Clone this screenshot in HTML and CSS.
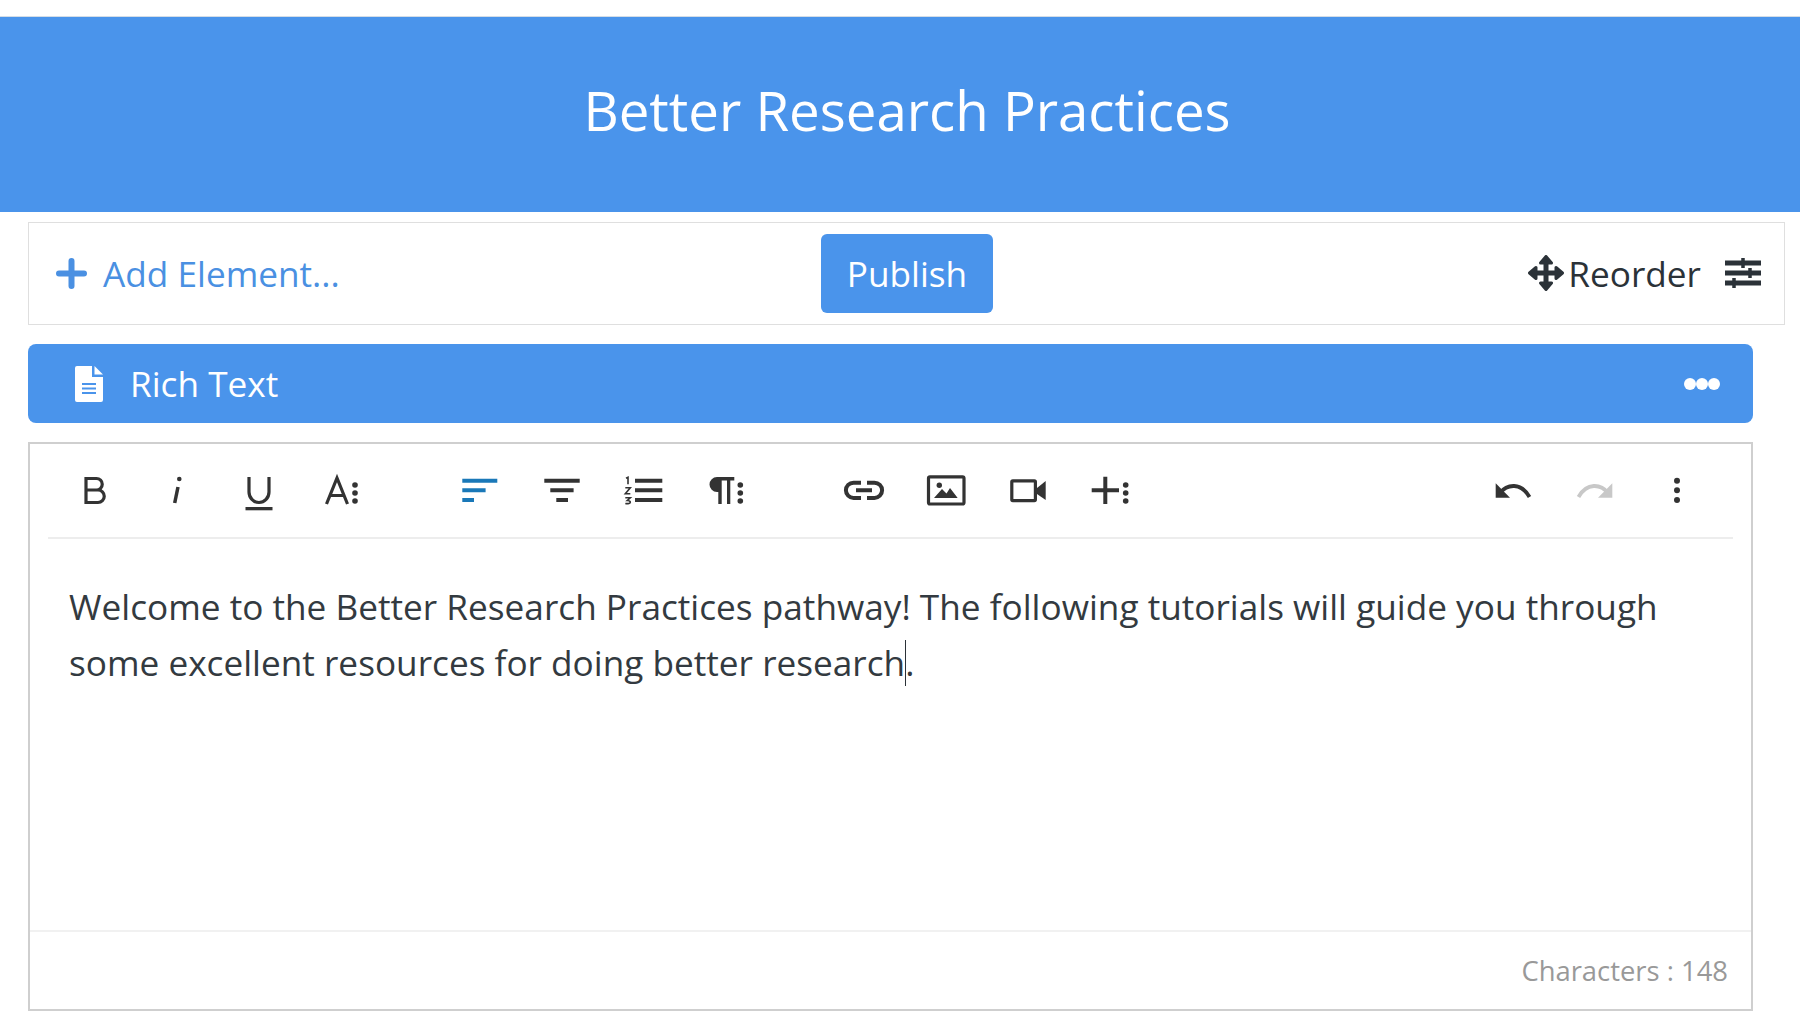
FILE: index.html
```html
<!DOCTYPE html>
<html lang="en">
<head>
<meta charset="utf-8">
<title>Better Research Practices</title>
<link rel="stylesheet" href="styles.css">
</head>
<body>
<header class="hero"><h1 class="hero-title">Better Research Practices</h1></header>
<section class="actions">
  <div class="actions-left">
    <svg class="add-icon" viewBox="0 0 31 31"><path d="M15.500 3v25M3 15.500h25"/></svg>
    <span class="add-label">Add Element...</span>
  </div>
  <button class="publish">Publish</button>
  <div class="actions-right">
    <svg class="move-icon" viewBox="0 0 36 36"><path class="dark-stroke" d="M18 5v26M5 18h26"/><path class="dark-fill" d="M18 1.500l5.500 6.500h-11zM18 34.500l5.500-6.500h-11zM1.500 18l6.500-5.500v11zM34.500 18l-6.500-5.500v11z"/></svg>
    <span class="reorder">Reorder</span>
    <svg class="sliders-icon" viewBox="0 0 36 32"><path class="dark-stroke" d="M0 6h36M0 16h36M0 26h36"/><path class="dark-stroke-thin" d="M18 1v10M25 11v10M9 21v10"/></svg>
  </div>
</section>
<div class="block-bar">
  <svg class="doc-icon" viewBox="0 0 28 36"><path class="doc-body" d="M2 0h15v11h11v23a2 2 0 0 1-2 2H2a2 2 0 0 1-2-2V2a2 2 0 0 1 2-2z"/><path class="doc-body" d="M19.500 0L28 8.500h-8.500z"/><path class="doc-lines" d="M7 18h14M7 22.500h14M7 27h14"/></svg>
  <span class="block-name">Rich Text</span>
  <span class="block-dots"><i></i><i></i><i></i></span>
</div>
<section class="editor">
  <div class="tools">
    <div class="tool-group">
      <button class="tool"><svg viewBox="0 0 44 44"><path class="line" d="M14 10.500h10.500a5.750 5.750 0 0 1 0 11.500H14zM14 22h12a6.250 6.250 0 0 1 0 12.500H14z"/></svg></button>
      <button class="tool"><svg viewBox="0 0 44 44"><circle class="solid" cx="24.300" cy="11" r="2.300"/><path class="line line-i" d="M23 19l-3.300 16"/></svg></button>
      <button class="tool"><svg viewBox="0 0 44 44"><path class="line" d="M12 9v15a10 10.500 0 0 0 20 0V9"/><rect class="solid" x="8.500" y="39" width="27" height="3.300"/></svg></button>
      <button class="tool"><svg viewBox="0 0 44 44"><path class="line" d="M6.500 36L17 10l10.500 26M10 27.500h14"/><circle class="solid" cx="35" cy="17" r="2.800"/><circle class="solid" cx="35" cy="25" r="2.800"/><circle class="solid" cx="35" cy="33" r="2.800"/></svg></button>
    </div>
    <div class="tool-group">
      <button class="tool"><svg viewBox="0 0 44 44"><path class="bar bar-active" d="M5.300 12.700h35M5.300 22.300h23.300M5.300 32h11.700"/></svg></button>
      <button class="tool"><svg viewBox="0 0 44 44"><path class="bar" d="M4.300 12.700h35.400M10.300 22.300h23.300M16.300 32h11.700"/></svg></button>
      <button class="tool"><svg viewBox="0 0 44 44"><path class="bar" d="M13 12.700h27.300M13 22.300h27.300M13 32h27.300"/><path class="num" d="M4 10.300l2-1v7M3.300 19.800h5l-5 6h5M3.300 29.800h5l-3 2.700c2 0 3 1 3 1.700 0 1-2 1.800-5 1.300"/></svg></button>
      <button class="tool"><svg viewBox="0 0 44 44"><path class="solid" d="M15 9h-3a7.500 7.500 0 0 0 0 15h3z"/><path class="solid" d="M12 9h17.300v3.500H25.300V36H22V12.500h-5.300V36h-3.400V12.500H12z"/><circle class="solid" cx="35.300" cy="17" r="2.800"/><circle class="solid" cx="35.300" cy="25" r="2.800"/><circle class="solid" cx="35.300" cy="33" r="2.800"/></svg></button>
    </div>
    <div class="tool-group">
      <button class="tool"><svg viewBox="0 0 44 44"><path class="bar" d="M19 14.700h-7.500a7.600 7.600 0 0 0 0 15.200H19M25 14.700h7.500a7.600 7.600 0 0 1 0 15.200H25M14 22.300h16"/></svg></button>
      <button class="tool"><svg viewBox="0 0 44 44"><rect class="line" x="3.500" y="8.800" width="35.500" height="27.200" rx="1.500"/><circle class="solid" cx="14.300" cy="17.300" r="2.700"/><path class="solid" d="M9 30l8-9 4.500 4.500L25 20l7.700 10z"/></svg></button>
      <button class="tool"><svg viewBox="0 0 44 44"><rect class="line" x="4.800" y="12.800" width="23.600" height="19.800" rx="1"/><path class="solid" d="M30 20l8.700-7v19L30 26z"/></svg></button>
      <button class="tool"><svg viewBox="0 0 44 44"><path class="bar" d="M15.300 8.700v27.300M1.700 22.300H29"/><circle class="solid" cx="35.700" cy="17" r="2.800"/><circle class="solid" cx="35.700" cy="25" r="2.800"/><circle class="solid" cx="35.700" cy="33" r="2.800"/></svg></button>
    </div>
    <div class="tool-group tool-group-end">
      <button class="tool"><svg viewBox="0 0 44 44"><path class="solid" d="M5.700 15.300v14.400h14.300z"/><path class="line line-heavy" d="M10 25c7-9 21-11 29.500 4"/></svg></button>
      <button class="tool tool-off"><svg viewBox="0 0 44 44"><path class="solid" d="M40.300 15.300v14.400H26z"/><path class="line line-heavy" d="M36 25c-7-9-21-11-29.500 4"/></svg></button>
      <button class="tool"><svg viewBox="0 0 44 44"><circle class="solid" cx="22" cy="12.700" r="3"/><circle class="solid" cx="22" cy="22.300" r="3"/><circle class="solid" cx="22" cy="32" r="3"/></svg></button>
    </div>
  </div>
  <div class="content">
    <p class="content-text">Welcome to the Better Research Practices pathway! The following tutorials will guide you through some excellent resources for doing better research<span class="caret"></span>.</p>
  </div>
  <footer class="counter">Characters : 148</footer>
</section>
</body>
</html>
```
FILE: styles.css
```css
* { box-sizing: border-box; }
html, body { height: 100%; }
body {
  margin: 0;
  padding-top: 16px;
  background: #fff;
  font-family: "Open Sans", sans-serif;
  color: #2b3238;
  overflow: hidden;
}
.hero {
  height: 196px;
  border-top: 1px solid #d4dde6;
  background: #4a94eb;
  display: flex;
  align-items: center;
  justify-content: center;
  padding: 0 0 9px 14px;
}
.hero-title {
  margin: 0;
  font-size: 54.600px;
  font-weight: 400;
  color: #fff;
}
.actions {
  margin: 10px 15px 0 28px;
  height: 103px;
  border: 1px solid #dfdfdf;
  display: grid;
  grid-template-columns: 1fr auto 1fr;
  align-items: center;
  padding: 0 23px 1px 27px;
}
.actions-left { display: flex; align-items: center; gap: 16px; }
.add-icon { width: 31px; height: 31px; }
.add-icon path { fill: none; stroke: #4a90e2; stroke-width: 6; stroke-linecap: round; }
.add-label { font-size: 35.200px; color: #4a90e2; }
.publish {
  width: 172px;
  height: 79px;
  margin-right: 3px;
  border: 0;
  border-radius: 6px;
  background: #4a94eb;
  color: #fff;
  font-family: inherit;
  font-size: 35.200px;
}
.actions-right { display: flex; align-items: center; justify-content: flex-end; }
.move-icon { width: 36px; height: 36px; margin-right: 4px; }
.reorder { font-size: 35.200px; margin-right: 24px; }
.sliders-icon { width: 36px; height: 32px; }
.dark-stroke { fill: none; stroke: #2b3238; stroke-width: 5; }
.dark-stroke-thin { fill: none; stroke: #2b3238; stroke-width: 3.500; }
.dark-fill { fill: #2b3238; stroke: #2b3238; stroke-width: 3; stroke-linejoin: round; }
.block-bar {
  margin: 19px 47px 0 28px;
  height: 79px;
  border-radius: 8px;
  background: #4a94eb;
  display: flex;
  align-items: center;
  padding: 0 33px 0 47px;
  color: #fff;
}
.doc-icon { width: 28px; height: 36px; margin-right: 27px; }
.doc-body { fill: #fff; }
.doc-lines { fill: none; stroke: #4a94eb; stroke-width: 2; }
.block-name { font-size: 35.200px; margin-bottom: 2px; }
.block-dots { margin-left: auto; display: flex; }
.block-dots i { width: 12px; height: 12px; border-radius: 50%; background: #fff; }
.editor {
  margin: 19px 47px 0 28px;
  height: 569px;
  border: 2px solid #cfcfcf;
  display: flex;
  flex-direction: column;
}
.tools {
  margin: 0 18px;
  height: 95px;
  border-bottom: 2px solid #ededed;
  display: flex;
  align-items: center;
  padding: 0 0 1px 5px;
}
.tool-group { display: flex; margin-right: 55px; }
.tool-group-end { margin: 0 15px 0 auto; }
.tool {
  width: 82.500px;
  height: 60px;
  padding: 0;
  border: 0;
  background: none;
  display: flex;
  align-items: center;
  justify-content: center;
}
.tool svg { width: 44px; height: 44px; }
.line { fill: none; stroke: #333; stroke-width: 3.200; }
.line-i { stroke-width: 3.500; }
.line-heavy { stroke-width: 3.800; }
.solid { fill: #333; }
.bar { fill: none; stroke: #333; stroke-width: 4; }
.bar-active { stroke: #1a78b8; }
.num { fill: none; stroke: #333; stroke-width: 1.600; }
.tool-off .line { stroke: #c8c8c8; }
.tool-off .solid { fill: #c8c8c8; }
.content { flex: 1; padding: 39px 20px 0 39px; }
.content-text { margin: 0; font-size: 35.200px; line-height: 56px; color: #333a40; }
.caret { display: inline-block; width: 0; height: 46px; border-left: 1px solid #2b3238; margin-right: -1px; vertical-align: -10px; }
.counter {
  height: 79px;
  border-top: 2px solid #f1f1f1;
  display: flex;
  align-items: center;
  justify-content: flex-end;
  padding-right: 23px;
  font-size: 27.400px;
  color: #999;
}
```
